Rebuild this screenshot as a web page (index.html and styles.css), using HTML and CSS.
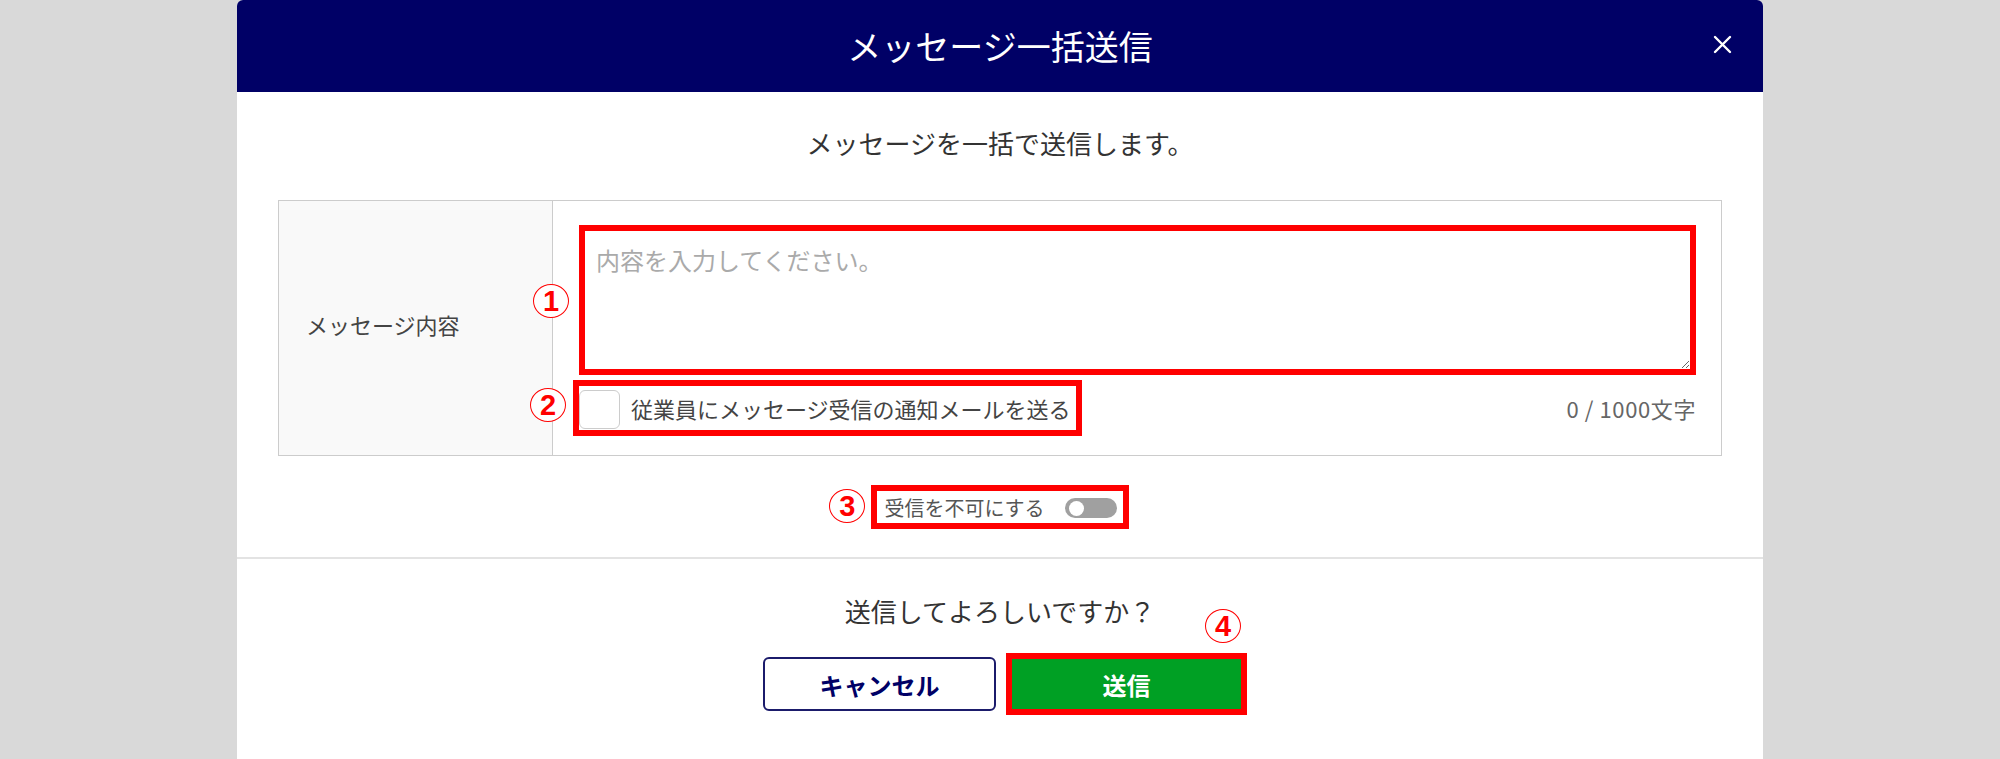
FILE: index.html
```html
<!DOCTYPE html>
<html lang="ja">
<head>
    <meta charset="UTF-8">
    <meta name="viewport" content="width=device-width, initial-scale=1.0">
    <title>メッセージ一括送信</title>
    <link rel="stylesheet" href="styles.css">
</head>
<body>
    <div class="modal">
        <div class="modal-header">
            <h2 class="modal-title">メッセージ一括送信</h2>
            <button type="button" class="close-btn" aria-label="閉じる">
                <svg width="19" height="19" viewBox="0 0 19 19">
                    <path d="M2 2 L17 17 M17 2 L2 17" stroke="#fff" stroke-width="2.4" stroke-linecap="round" fill="none"/>
                </svg>
            </button>
        </div>

        <div class="modal-body">
            <p class="lead">メッセージを一括で送信します。</p>

            <div class="form-row">
                <div class="form-label">メッセージ内容</div>
                <div class="form-field">
                    <div class="field">
                        <span class="mark mark-1">1</span>
                        <textarea name="message" placeholder="内容を入力してください。"></textarea>
                    </div>
                    <div class="field-foot">
                        <label class="check">
                            <span class="mark mark-2">2</span>
                            <input type="checkbox" name="notify">
                            <span>従業員にメッセージ受信の通知メールを送る</span>
                        </label>
                        <span class="count">0 / 1000文字</span>
                    </div>
                </div>
            </div>

            <div class="toggle-row">
                <label class="toggle">
                    <span class="mark mark-3">3</span>
                    <span>受信を不可にする</span>
                    <span class="switch"></span>
                </label>
            </div>
        </div>

        <div class="modal-footer">
            <p class="confirm">送信してよろしいですか？</p>
            <div class="actions">
                <button type="button" class="btn btn-cancel">キャンセル</button>
                <button type="submit" class="btn btn-send">送信<span class="mark mark-4">4</span></button>
            </div>
        </div>
    </div>
</body>
</html>
```

FILE: styles.css
```css
body {
    margin: 0;
    background-color: #d9d9d9;
    font-family: "Noto Sans CJK JP", "Noto Sans", sans-serif;
    color: #333;
}

.modal {
    width: 1526px;
    min-height: 100vh;
    margin: 0 auto;
    background-color: #fff;
    border-radius: 6px 6px 0 0;
}

.modal-header {
    position: relative;
    height: 92px;
    display: flex;
    justify-content: center;
    align-items: center;
    background-color: #000066;
    border-radius: 6px 6px 0 0;
}

.modal-title {
    margin: 0;
    font-size: 34px;
    font-weight: normal;
    line-height: 40px;
    color: #fff;
}

.close-btn {
    position: absolute;
    top: 35px;
    right: 31px;
    padding: 0;
    border: none;
    background: none;
    width: 19px;
    height: 19px;
    cursor: pointer;
}

.close-btn svg {
    display: block;
}

.modal-body {
    padding: 33px 41px 34px;
}

.lead {
    margin: 0 0 39px;
    font-size: 26px;
    line-height: 36px;
    text-align: center;
    color: #333;
}

/* 入力テーブル */
.form-row {
    display: grid;
    grid-template-columns: 274px 1fr;
    border: 1px solid #ccc;
}

.form-label {
    display: flex;
    align-items: center;
    padding: 0 0 8px 27px;
    background-color: #f9f9f9;
    border-right: 1px solid #ccc;
    font-size: 22px;
    color: #444;
}

.form-field {
    padding: 24px 25px 25px 26px;
}

.field {
    position: relative;
}

textarea {
    display: block;
    width: 100%;
    height: 150px;
    box-sizing: border-box;
    padding: 12px 11px;
    border: 6px solid #ff0000;
    font-family: inherit;
    font-size: 24px;
    line-height: 34px;
    color: #333;
}

textarea::placeholder {
    color: #aaa;
}

.field-foot {
    display: flex;
    justify-content: space-between;
    align-items: center;
    margin-top: 11px;
}

.check {
    position: relative;
    display: inline-flex;
    align-items: center;
    gap: 11px;
    height: 44px;
    padding-right: 5px;
    outline: 6px solid #ff0000;
    font-size: 22px;
    color: #444;
}

.check input {
    appearance: none;
    width: 41px;
    height: 39px;
    margin: 2px 0 0;
    border: 1.5px solid #ccc;
    border-radius: 6px;
    background-color: #fff;
}

.count {
    font-size: 22px;
    letter-spacing: 0.6px;
    color: #666;
}

/* トグル */
.toggle-row {
    display: flex;
    justify-content: center;
    margin-top: 35px;
}

.toggle {
    position: relative;
    display: inline-flex;
    align-items: center;
    gap: 20px;
    height: 32px;
    padding: 0 6px 0 7px;
    outline: 6px solid #ff0000;
    font-size: 20px;
    color: #555;
}

.switch {
    position: relative;
    width: 52px;
    height: 20px;
    margin-top: 2px;
    border-radius: 10px;
    background-color: #a0a0a0;
}

.switch::after {
    content: "";
    position: absolute;
    top: 2.5px;
    left: 4px;
    width: 15px;
    height: 15px;
    border-radius: 50%;
    background-color: #fff;
}

/* フッター */
.modal-footer {
    border-top: 2px solid #e3e3e3;
    padding-top: 34px;
    text-align: center;
}

.confirm {
    margin: 0 0 28px;
    font-size: 26px;
    line-height: 36px;
    color: #333;
}

.actions {
    display: flex;
    justify-content: center;
    gap: 14px;
    padding-left: 6px;
}

.btn {
    position: relative;
    width: 233px;
    height: 54px;
    box-sizing: border-box;
    border-radius: 6px;
    font-family: inherit;
    font-size: 24px;
    font-weight: bold;
    cursor: pointer;
}

.btn-cancel {
    border: 2px solid #1b1b6b;
    background-color: #fff;
    color: #000066;
}

.btn-send {
    border: none;
    border-radius: 0;
    background-color: #00a024;
    color: #fff;
    outline: 6px solid #ff0000;
    outline-offset: -2px;
}

/* 注記の丸数字 */
.mark {
    position: absolute;
    width: 36px;
    height: 34px;
    box-sizing: border-box;
    border: 1.5px solid #ff0000;
    border-radius: 50%;
    display: flex;
    justify-content: center;
    align-items: center;
    font-family: "Liberation Sans", sans-serif;
    font-size: 29px;
    font-weight: bold;
    line-height: 1;
    color: #ff0000;
    background-color: #fff;
}

.mark-1 {
    left: -46px;
    top: 59px;
}

.mark-2 {
    left: -49px;
    top: 2px;
}

.mark-3 {
    left: -48px;
    top: -2px;
}

.mark-4 {
    left: 195px;
    top: -48px;
}
```
